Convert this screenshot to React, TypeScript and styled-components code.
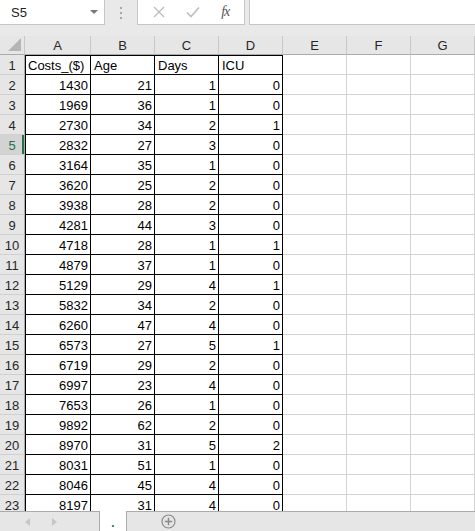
import React from "react";
import styled, { createGlobalStyle } from "styled-components";

const GREEN = "#217346";
const GRID_LINE = "#d4d4d4";
const HEADER_BG = "#e6e6e6";

const GlobalStyle = createGlobalStyle`
  html, body {
    margin: 0;
    padding: 0;
    background: #fff;
    overflow: hidden;
  }
  body {
    font-family: "Liberation Sans", Arial, sans-serif;
  }
`;

const Window = styled.div`
  width: 475px;
  height: 531px;
  display: flex;
  flex-direction: column;
  background: ${HEADER_BG};
  overflow: hidden;
`;

const FormulaBar = styled.div`
  height: 36px;
  flex: none;
  display: flex;
  align-items: flex-start;
  background: #e9e9e9;
`;

const NameBox = styled.div`
  width: 105px;
  height: 25px;
  box-sizing: border-box;
  background: #fff;
  border: 1px solid #c6c6c6;
  border-top: none;
  border-left: none;
  display: flex;
  align-items: center;
  justify-content: space-between;
  padding: 0 6px 0 11px;
  font-size: 13px;
  color: #222;
`;

const DropArrow = styled.span`
  width: 0;
  height: 0;
  border-left: 4px solid transparent;
  border-right: 4px solid transparent;
  border-top: 4px solid #777;
`;

const Grip = styled.div`
  width: 32px;
  height: 25px;
  display: flex;
  flex-direction: column;
  align-items: center;
  justify-content: center;
  gap: 3px;

  span {
    width: 2px;
    height: 2px;
    background: #a6a6a6;
  }
`;

const ButtonBox = styled.div`
  width: 108px;
  height: 25px;
  box-sizing: border-box;
  background: #fff;
  border: 1px solid #c6c6c6;
  border-top: none;
  display: flex;
  align-items: center;
  justify-content: space-around;
  padding: 0 4px;
`;

const FxLabel = styled.span`
  font-family: "Liberation Serif", "Times New Roman", serif;
  font-style: italic;
  font-size: 14px;
  color: #555;
  letter-spacing: -1px;
`;

const FormulaInput = styled.div`
  flex: 1;
  margin-left: 4px;
  height: 25px;
  box-sizing: border-box;
  background: #fff;
  border: 1px solid #c6c6c6;
  border-top: none;
  border-right: none;
`;

const Sheet = styled.div`
  flex: 1;
  overflow: hidden;
  background: #fff;
  display: grid;
  grid-template-columns: 25px 66px repeat(6, 64px);
  grid-auto-rows: 20px;
  grid-template-rows: 19px;
  font-size: 13px;
`;

const Corner = styled.div`
  background: ${HEADER_BG};
  border-right: 1px solid #c8c8c8;
  border-bottom: 1px solid #ababab;
  box-sizing: border-box;
  position: relative;

  &::after {
    content: "";
    position: absolute;
    right: 3px;
    bottom: 3px;
    width: 0;
    height: 0;
    border-left: 13px solid transparent;
    border-bottom: 13px solid #b5b5b5;
  }
`;

const ColHeader = styled.div`
  background: ${HEADER_BG};
  box-sizing: border-box;
  border-right: 1px solid #c8c8c8;
  border-bottom: 1px solid #ababab;
  display: flex;
  align-items: center;
  justify-content: center;
  color: #262626;
  font-size: 13px;
  padding-top: 1px;
`;

const RowHeader = styled.div<{ $active?: boolean }>`
  background: ${({ $active }) => ($active ? "#d3d3d3" : HEADER_BG)};
  color: ${({ $active }) => ($active ? GREEN : "#262626")};
  box-sizing: border-box;
  border-bottom: 1px solid #d0d0d0;
  border-right: 1px solid #ababab;
  display: flex;
  align-items: center;
  justify-content: center;
  font-size: 13px;
  padding-top: 1px;
  ${({ $active }) => $active && `box-shadow: inset -2px 0 0 ${GREEN};`}
`;

const Cell = styled.div<{ $data?: boolean; $first?: boolean; $top?: boolean; $num?: boolean }>`
  box-sizing: border-box;
  border-right: 1px solid ${({ $data }) => ($data ? "#000" : GRID_LINE)};
  border-bottom: 1px solid ${({ $data }) => ($data ? "#000" : GRID_LINE)};
  display: flex;
  align-items: center;
  justify-content: ${({ $num }) => ($num ? "flex-end" : "flex-start")};
  padding: 2px 2px 0 3px;
  color: #000;
  white-space: nowrap;
  overflow: hidden;
  ${({ $first, $top }) => {
    const shadows: string[] = [];
    if ($first) shadows.push("inset 1px 0 0 #000");
    if ($top) shadows.push("inset 0 1px 0 #000");
    return shadows.length ? `box-shadow: ${shadows.join(", ")};` : "";
  }}
`;

const TabBar = styled.div`
  height: 20px;
  flex: none;
  display: flex;
  background: #fff;
`;

const TabNav = styled.div`
  width: 100px;
  box-sizing: border-box;
  background: ${HEADER_BG};
  border-top: 1px solid #ababab;
  border-right: 1px solid #ababab;
  display: flex;
  align-items: center;
  padding-left: 25px;
  gap: 22px;
`;

const NavArrow = styled.span<{ $dir: "left" | "right" }>`
  width: 0;
  height: 0;
  border-top: 4px solid transparent;
  border-bottom: 4px solid transparent;
  ${({ $dir }) =>
    $dir === "left" ? "border-right: 5px solid #c6c6c6;" : "border-left: 5px solid #c6c6c6;"}
`;

const ActiveTab = styled.div`
  width: 26px;
  display: flex;
  align-items: flex-end;
  justify-content: center;
  color: ${GREEN};
  font-size: 12px;
  font-weight: bold;
  line-height: 16px;
`;

const TabRest = styled.div`
  flex: 1;
  box-sizing: border-box;
  background: ${HEADER_BG};
  border-top: 1px solid #ababab;
  border-left: 1px solid #ababab;
  display: flex;
  align-items: center;
  padding-left: 34px;
`;

const columns = ["A", "B", "C", "D", "E", "F", "G"];

const headerRow = ["Costs_($)", "Age", "Days", "ICU"];

const data: number[][] = [
  [1430, 21, 1, 0],
  [1969, 36, 1, 0],
  [2730, 34, 2, 1],
  [2832, 27, 3, 0],
  [3164, 35, 1, 0],
  [3620, 25, 2, 0],
  [3938, 28, 2, 0],
  [4281, 44, 3, 0],
  [4718, 28, 1, 1],
  [4879, 37, 1, 0],
  [5129, 29, 4, 1],
  [5832, 34, 2, 0],
  [6260, 47, 4, 0],
  [6573, 27, 5, 1],
  [6719, 29, 2, 0],
  [6997, 23, 4, 0],
  [7653, 26, 1, 0],
  [9892, 62, 2, 0],
  [8970, 31, 5, 2],
  [8031, 51, 1, 0],
  [8046, 45, 4, 0],
  [8197, 31, 4, 0],
];

const ACTIVE_ROW = 5;

function CrossIcon() {
  return (
    <svg width="12" height="12" viewBox="0 0 12 12">
      <path d="M1 1 L11 11 M11 1 L1 11" stroke="#bcbcbc" strokeWidth="1.3" fill="none" />
    </svg>
  );
}

function CheckIcon() {
  return (
    <svg width="14" height="12" viewBox="0 0 14 12">
      <path d="M1 6.5 L5 10.5 L13 1.5" stroke="#bcbcbc" strokeWidth="1.6" fill="none" />
    </svg>
  );
}

function PlusCircle() {
  return (
    <svg width="15" height="15" viewBox="0 0 15 15">
      <circle cx="7.5" cy="7.5" r="6.5" stroke="#8a8a8a" strokeWidth="1.2" fill="none" />
      <path d="M7.5 3.8 V11.2 M3.8 7.5 H11.2" stroke="#8a8a8a" strokeWidth="1.5" />
    </svg>
  );
}

export default function App() {
  const rows: (string | number)[][] = [headerRow, ...data];

  return (
    <>
      <GlobalStyle />
      <Window>
        <FormulaBar>
          <NameBox>
            S5
            <DropArrow />
          </NameBox>
          <Grip>
            <span />
            <span />
            <span />
          </Grip>
          <ButtonBox>
            <CrossIcon />
            <CheckIcon />
            <FxLabel>fx</FxLabel>
          </ButtonBox>
          <FormulaInput />
        </FormulaBar>

        <Sheet>
          <Corner />
          {columns.map((c) => (
            <ColHeader key={c}>{c}</ColHeader>
          ))}

          {rows.map((row, r) => {
            const rowNum = r + 1;
            return (
              <React.Fragment key={rowNum}>
                <RowHeader $active={rowNum === ACTIVE_ROW}>{rowNum}</RowHeader>
                {columns.map((c, ci) => {
                  const value = ci < row.length ? row[ci] : "";
                  const isData = ci < 4;
                  return (
                    <Cell
                      key={c}
                      $data={isData}
                      $first={ci === 0}
                      $top={r === 0 && isData}
                      $num={typeof value === "number"}
                    >
                      {value}
                    </Cell>
                  );
                })}
              </React.Fragment>
            );
          })}
        </Sheet>

        <TabBar>
          <TabNav>
            <NavArrow $dir="left" />
            <NavArrow $dir="right" />
          </TabNav>
          <ActiveTab>.</ActiveTab>
          <TabRest>
            <PlusCircle />
          </TabRest>
        </TabBar>
      </Window>
    </>
  );
}
